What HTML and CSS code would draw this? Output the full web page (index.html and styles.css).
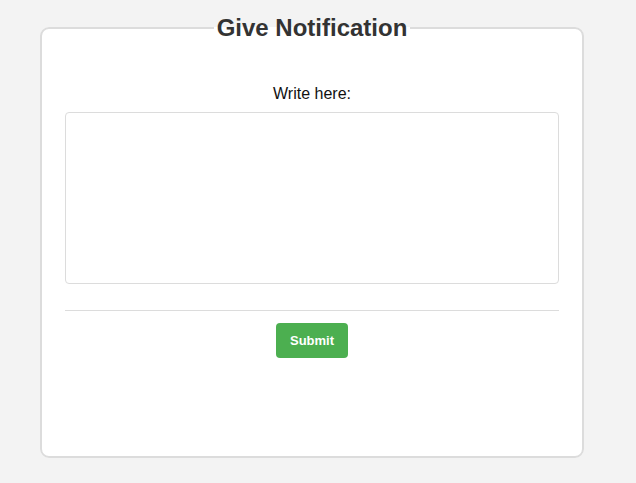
FILE: index.html
```html
<!DOCTYPE html>
<html>
<head>
<meta charset="utf-8">
<link rel="stylesheet" href="styles.css">
</head>
<body>
<form class="page">
  <fieldset class="card">
    <legend class="card-title">Give Notification</legend>
    <label class="field-label" for="msg">Write here:</label>
    <textarea class="field-input" id="msg"></textarea>
    <hr class="divider">
    <div class="actions">
      <button type="button" class="btn-submit">Submit</button>
    </div>
  </fieldset>
</form>
</body>
</html>
```

FILE: styles.css
```css
html, body {
  margin: 0;
  padding: 0;
  background: #f3f3f3;
  font-family: "Liberation Sans", Arial, sans-serif;
}
.page {
  padding: 14px 0 0 40px;
  margin: 0;
}
.card {
  box-sizing: border-box;
  width: 544px;
  height: 444px;
  margin: 0;
  padding: 43px 23px 0 23px;
  background: #fff;
  border: 2px solid #dcdcdc;
  border-radius: 9px;
  display: flex;
  flex-direction: column;
}
.card-title {
  margin: 0 auto;
  padding: 0 3px;
  font-size: 24px;
  font-weight: bold;
  color: #333;
}
.field-label {
  display: block;
  text-align: center;
  font-size: 16px;
  color: #111;
  margin-bottom: 9px;
}
.field-input {
  box-sizing: border-box;
  width: 100%;
  height: 172px;
  margin: 0;
  border: 1px solid #dcdcdc;
  border-radius: 4px;
  resize: none;
  display: block;
}
.divider {
  margin: 26px 0 12px;
  border: 0;
  border-top: 1px solid #dcdcdc;
  height: 0;
}
.actions {
  display: flex;
  justify-content: center;
}
.btn-submit {
  width: 72px;
  height: 35px;
  background: #4caf50;
  color: #fff;
  border: 0;
  border-radius: 4px;
  font-family: "Liberation Sans", Arial, sans-serif;
  font-weight: bold;
  font-size: 13px;
}
```
